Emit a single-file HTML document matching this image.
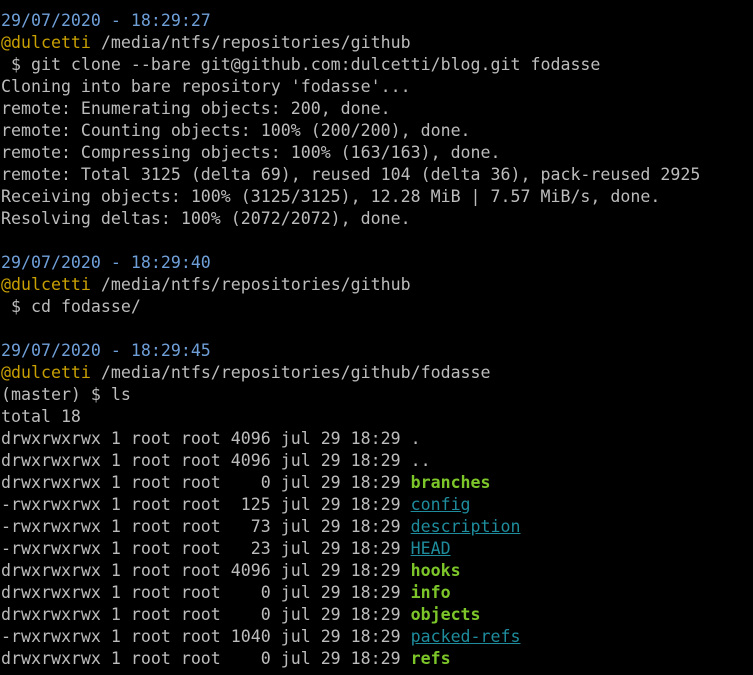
<html><head><style>
body{margin:0;background:#000;width:753px;height:675px;overflow:hidden}
pre{margin:0;padding:10px 0 0 1px;font-family:"DejaVu Sans Mono",monospace;font-size:16.6px;line-height:22px;color:#bcbcbc}
.d{color:#6f9fd8}.u{color:#c8a000}.g{color:#7cc62a;font-weight:bold}.c{color:#1e8c9c;text-decoration:underline}
</style></head><body><pre><span class="d">29/07/2020 - 18:29:27</span>
<span class="u">@dulcetti</span> /media/ntfs/repositories/github
 $ git clone --bare git@github.com:dulcetti/blog.git fodasse
Cloning into bare repository 'fodasse'...
remote: Enumerating objects: 200, done.
remote: Counting objects: 100% (200/200), done.
remote: Compressing objects: 100% (163/163), done.
remote: Total 3125 (delta 69), reused 104 (delta 36), pack-reused 2925
Receiving objects: 100% (3125/3125), 12.28 MiB | 7.57 MiB/s, done.
Resolving deltas: 100% (2072/2072), done.

<span class="d">29/07/2020 - 18:29:40</span>
<span class="u">@dulcetti</span> /media/ntfs/repositories/github
 $ cd fodasse/

<span class="d">29/07/2020 - 18:29:45</span>
<span class="u">@dulcetti</span> /media/ntfs/repositories/github/fodasse
(master) $ ls
total 18
drwxrwxrwx 1 root root 4096 jul 29 18:29 .
drwxrwxrwx 1 root root 4096 jul 29 18:29 ..
drwxrwxrwx 1 root root    0 jul 29 18:29 <span class="g">branches</span>
-rwxrwxrwx 1 root root  125 jul 29 18:29 <span class="c">config</span>
-rwxrwxrwx 1 root root   73 jul 29 18:29 <span class="c">description</span>
-rwxrwxrwx 1 root root   23 jul 29 18:29 <span class="c">HEAD</span>
drwxrwxrwx 1 root root 4096 jul 29 18:29 <span class="g">hooks</span>
drwxrwxrwx 1 root root    0 jul 29 18:29 <span class="g">info</span>
drwxrwxrwx 1 root root    0 jul 29 18:29 <span class="g">objects</span>
-rwxrwxrwx 1 root root 1040 jul 29 18:29 <span class="c">packed-refs</span>
drwxrwxrwx 1 root root    0 jul 29 18:29 <span class="g">refs</span>
</pre></body></html>
